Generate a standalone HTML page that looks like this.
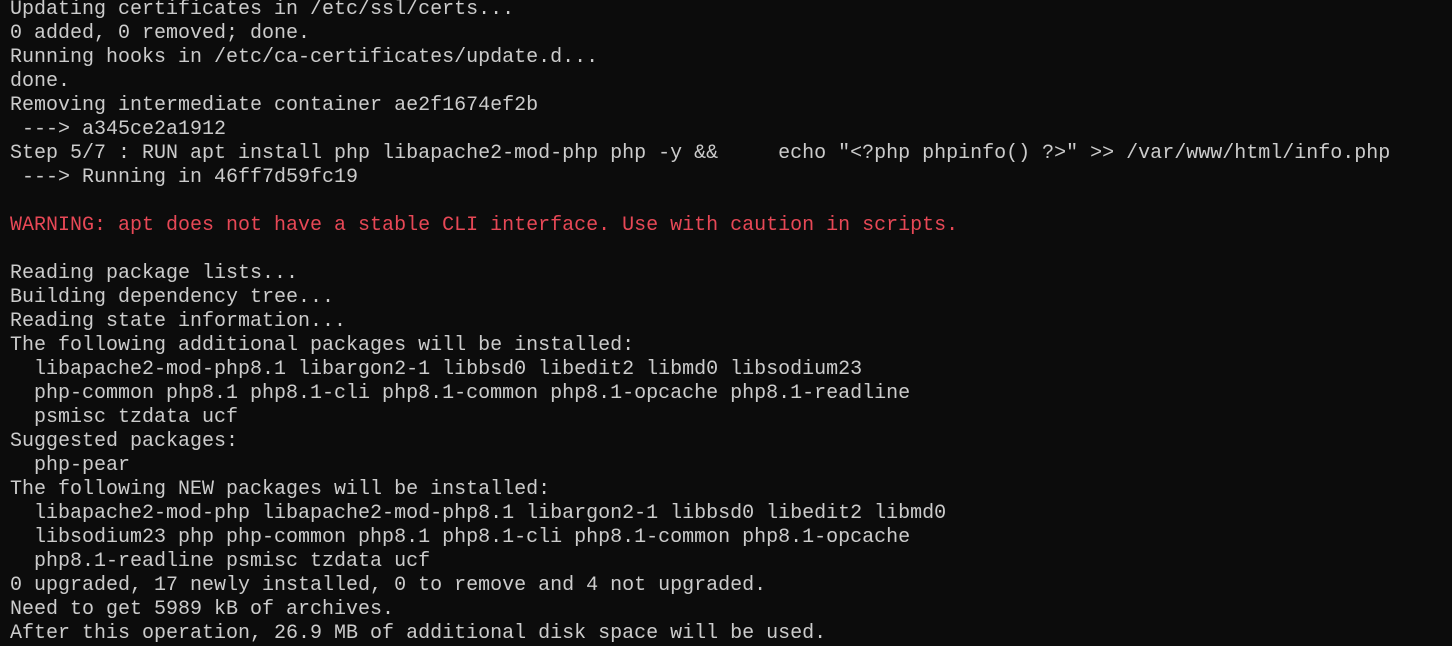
<!DOCTYPE html>
<html><head><meta charset="utf-8"><style>
html,body{margin:0;padding:0;background:#0c0c0c;width:1452px;height:632px;overflow:hidden}
pre{margin:0;position:absolute;left:10px;top:-2px;font-family:"Liberation Mono",monospace;font-size:20px;line-height:24px;color:#cccccc;white-space:pre}
.r{color:#e74856}
</style></head><body><pre>Updating certificates in /etc/ssl/certs...
0 added, 0 removed; done.
Running hooks in /etc/ca-certificates/update.d...
done.
Removing intermediate container ae2f1674ef2b
 ---&gt; a345ce2a1912
Step 5/7 : RUN apt install php libapache2-mod-php php -y &amp;&amp;     echo "&lt;?php phpinfo() ?&gt;" &gt;&gt; /var/www/html/info.php
 ---&gt; Running in 46ff7d59fc19

<span class="r">WARNING: apt does not have a stable CLI interface. Use with caution in scripts.</span>

Reading package lists...
Building dependency tree...
Reading state information...
The following additional packages will be installed:
  libapache2-mod-php8.1 libargon2-1 libbsd0 libedit2 libmd0 libsodium23
  php-common php8.1 php8.1-cli php8.1-common php8.1-opcache php8.1-readline
  psmisc tzdata ucf
Suggested packages:
  php-pear
The following NEW packages will be installed:
  libapache2-mod-php libapache2-mod-php8.1 libargon2-1 libbsd0 libedit2 libmd0
  libsodium23 php php-common php8.1 php8.1-cli php8.1-common php8.1-opcache
  php8.1-readline psmisc tzdata ucf
0 upgraded, 17 newly installed, 0 to remove and 4 not upgraded.
Need to get 5989 kB of archives.
After this operation, 26.9 MB of additional disk space will be used.</pre></body></html>
